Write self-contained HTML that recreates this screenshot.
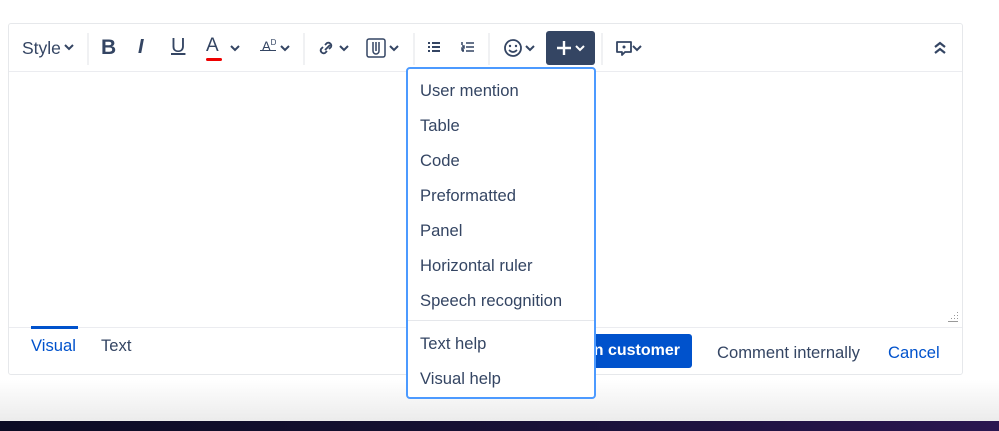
<!DOCTYPE html><html><head><style>
*{box-sizing:border-box;margin:0;padding:0}
body{width:999px;height:431px;overflow:hidden;background:linear-gradient(#fff 0,#fff 380px,#ececec 420px);font-family:"Liberation Sans",sans-serif;color:#344563;position:relative}
.ed{position:absolute;left:8px;top:23px;width:955px;height:352px;border:1px solid #e6e8eb;border-radius:3px;background:#fff}
.tb{position:absolute;left:0;top:0;width:100%;height:48px;border-bottom:1px solid #ebecf0}
.sep{position:absolute;top:9px;width:2px;height:32px;background:#f0f1f3}
.i{position:absolute;top:13px}
.bot{position:absolute;left:0;top:303px;width:100%;border-top:1px solid #ebecf0}
.dd{position:absolute;left:406px;top:67px;width:190px;height:332px;border:2px solid #4c9aff;border-radius:4px;background:#fff}
.dd div{position:absolute;left:12px;font-size:16.6px;color:#344563}
.dark{position:absolute;left:0;top:421px;width:999px;height:10px;background:linear-gradient(90deg,#0b0b24,#141030 40%,#1e1240 70%,#2a1650)}
</style></head><body>
<div class="ed">
 <div class="tb">
  <div style="position:absolute;left:13px;top:14px;font-size:17.5px">Style</div>
  <svg class="i" style="left:55px;top:19px" width="10" height="8"><path d="M1 2l4 4 4-4" stroke="#344563" stroke-width="2" fill="none"/></svg>
  <div class="sep" style="left:78px"></div>
  <div style="position:absolute;left:92px;top:12px;font-size:21px;font-weight:bold">B</div>
  <div style="position:absolute;left:129px;top:12px;font-size:20px;font-style:italic;font-weight:bold">I</div>
  <div style="position:absolute;left:162px;top:11px;font-size:20px;text-decoration:underline">U</div>
  <div style="position:absolute;left:197px;top:11px;font-size:19px">A</div>
  <div style="position:absolute;left:197px;top:34px;width:16px;height:3px;background:#e00;border-radius:2px"></div>
  <svg class="i" style="left:221px;top:20px" width="10" height="8"><path d="M1 2l4 4 4-4" stroke="#344563" stroke-width="2" fill="none"/></svg>
  <div style="position:absolute;left:253px;top:14px;font-size:13px">A<sup style="font-size:8px">D</sup></div>
  <div style="position:absolute;left:251px;top:26px;width:16px;height:1px;background:#344563"></div>
  <svg class="i" style="left:271px;top:20px" width="10" height="8"><path d="M1 2l4 4 4-4" stroke="#344563" stroke-width="2" fill="none"/></svg>
  <div class="sep" style="left:294px"></div>
  <svg class="i" style="left:308px;top:15px" width="20" height="18"><path d="M8 11l5-5M6 8l-2 2a3 3 0 004 4l2-2M12 10l2-2a3 3 0 00-4-4l-2 2" stroke="#344563" stroke-width="1.8" fill="none"/></svg>
  <svg class="i" style="left:330px;top:20px" width="10" height="8"><path d="M1 2l4 4 4-4" stroke="#344563" stroke-width="2" fill="none"/></svg>
  <svg class="i" style="left:357px;top:14px" width="20" height="20"><rect x="1" y="1" width="18" height="18" rx="2" stroke="#344563" stroke-width="1.5" fill="none"/><path d="M7 4v9a3 3 0 006 0V4M10 4v9" stroke="#344563" stroke-width="1.5" fill="none"/></svg>
  <svg class="i" style="left:380px;top:20px" width="10" height="8"><path d="M1 2l4 4 4-4" stroke="#344563" stroke-width="2" fill="none"/></svg>
  <div class="sep" style="left:404px"></div>
  <svg class="i" style="left:418px;top:17px" width="14" height="13"><path d="M1 2h2M1 6h2M1 10h2M5 2h8M5 6h8M5 10h8" stroke="#344563" stroke-width="2"/></svg>
  <svg class="i" style="left:452px;top:17px" width="14" height="13"><path d="M5 2h8M5 6h8M5 10h8M1 1v3M1 5h2v2H1v2h2M1 10h2" stroke="#344563" stroke-width="1.5" fill="none"/></svg>
  <div class="sep" style="left:479px"></div>
  <svg class="i" style="left:494px;top:14px" width="20" height="20"><circle cx="10" cy="10" r="8" stroke="#344563" stroke-width="1.8" fill="none"/><circle cx="7" cy="8" r="1.2" fill="#344563"/><circle cx="13" cy="8" r="1.2" fill="#344563"/><path d="M6 12q4 4 8 0" stroke="#344563" stroke-width="1.6" fill="none"/></svg>
  <svg class="i" style="left:516px;top:20px" width="10" height="8"><path d="M1 2l4 4 4-4" stroke="#344563" stroke-width="2" fill="none"/></svg>
  <div style="position:absolute;left:537px;top:7px;width:49px;height:34px;background:#344563;border-radius:3px"></div>
  <svg class="i" style="left:546px;top:15px" width="18" height="18"><path d="M9 2v14M2 9h14" stroke="#fff" stroke-width="2.4"/></svg>
  <svg class="i" style="left:566px;top:20px" width="10" height="8"><path d="M1 2l4 4 4-4" stroke="#fff" stroke-width="2" fill="none"/></svg>
  <div class="sep" style="left:592px"></div>
  <svg class="i" style="left:606px;top:15px" width="20" height="20"><path d="M2 3h14v10h-6l-3 3v-3H2z" stroke="#344563" stroke-width="1.8" fill="none" stroke-linejoin="round"/><circle cx="9" cy="8" r="1.5" fill="#344563"/></svg>
  <svg class="i" style="left:623px;top:20px" width="10" height="8"><path d="M1 2l4 4 4-4" stroke="#344563" stroke-width="2" fill="none"/></svg>
  <svg class="i" style="left:925px;top:17px" width="12" height="14"><path d="M1 6l5-4 5 4M1 12l5-4 5 4" stroke="#344563" stroke-width="2.2" fill="none"/></svg>
 </div>
 <svg style="position:absolute;left:939px;top:288px" width="12" height="12"><g fill="#999"><rect x="9" y="0" width="1" height="1"/><rect x="6" y="3" width="1" height="1"/><rect x="9" y="3" width="1" height="1"/><rect x="3" y="6" width="1" height="1"/><rect x="6" y="6" width="1" height="1"/><rect x="9" y="6" width="1" height="1"/><rect x="0" y="9" width="10" height="1"/></g></svg>
 <div class="bot">
  <div style="position:absolute;left:22px;top:-2px;width:47px;height:3px;background:#0052cc"></div>
  <div style="position:absolute;left:22px;top:8px;font-size:16.6px;color:#0052cc">Visual</div>
  <div style="position:absolute;left:92px;top:8px;font-size:16.6px">Text</div>
  <div style="position:absolute;left:460px;top:6px;width:223px;height:34px;background:#0052cc;border-radius:3px;color:#fff;font-weight:bold;font-size:16px;line-height:34px;text-align:right;padding-right:12px;white-space:nowrap">Comment on customer</div>
  <div style="position:absolute;left:708px;top:15px;font-size:16.6px">Comment internally</div>
  <div style="position:absolute;left:879px;top:15px;font-size:16.6px;color:#0052cc">Cancel</div>
 </div>
</div>
<div class="dd">
 <div style="top:12px">User mention</div>
 <div style="top:47px">Table</div>
 <div style="top:82px">Code</div>
 <div style="top:117px">Preformatted</div>
 <div style="top:152px">Panel</div>
 <div style="top:187px">Horizontal ruler</div>
 <div style="top:222px">Speech recognition</div>
 <div style="left:0;top:251px;width:186px;height:1px;background:#e5e7eb"></div>
 <div style="top:265px">Text help</div>
 <div style="top:300px">Visual help</div>
</div>
<div class="dark"></div>
</body></html>
